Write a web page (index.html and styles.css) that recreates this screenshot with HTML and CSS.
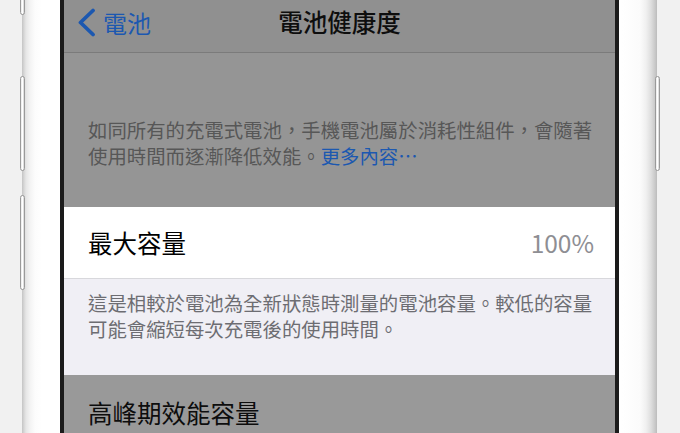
FILE: index.html
```html
<!DOCTYPE html>
<html lang="zh-Hant">
<head>
<meta charset="utf-8">
<title>電池健康度</title>
<link rel="stylesheet" href="styles.css">
</head>
<body>
<div class="stage">
  <div class="phone">
    <span class="btn btn-l1"></span>
    <span class="btn btn-l2"></span>
    <span class="btn btn-l3"></span>
    <span class="btn btn-r1"></span>
    <div class="bezel">
      <div class="screen">
        <header class="nav">
          <div class="back">
            <svg class="chev" viewBox="0 0 19 29" width="19" height="29" aria-hidden="true">
              <polyline points="16,2.5 3.5,14.5 16,26.5" fill="none" stroke="currentColor" stroke-width="3.8" stroke-linecap="round" stroke-linejoin="round"/>
            </svg>
            <span class="back-text">電池</span>
          </div>
          <h1 class="title">電池健康度</h1>
          <div class="spacer"></div>
        </header>
        <section class="intro">
          <p class="line">如同所有的充電式電池，手機電池屬於消耗性組件，會隨著</p>
          <p class="line"><span>使用時間而逐漸降低效能。</span><span class="link">更多內容⋯</span></p>
        </section>
        <section class="cell cell-active">
          <span class="label">最大容量</span>
          <span class="value">100%</span>
        </section>
        <section class="footer">
          <p>這是相較於電池為全新狀態時測量的電池容量。較低的容量可能會縮短每次充電後的使用時間。</p>
        </section>
        <section class="cell cell-dim">
          <span class="label">高峰期效能容量</span>
        </section>
      </div>
    </div>
  </div>
</div>
</body>
</html>
```
FILE: styles.css
```css
* { box-sizing: border-box; margin: 0; padding: 0; }
html, body {
  width: 680px;
  height: 433px;
  overflow: hidden;
  background: #f1f1f1;
}
body {
  font-family: "Noto Sans CJK TC", "Noto Sans", sans-serif;
}
.stage {
  display: flex;
  height: 433px;
  padding-left: 22px;
}
.phone {
  position: relative;
  width: 635px;
  height: 433px;
  padding: 0 38px;
  background: linear-gradient(to right,
    #c4c4c4 0px, #d6d6d6 2px, #e6e6e6 4px, #f3f3f3 8px, #fcfcfc 13px, #ffffff 20px,
    #ffffff 600px, #fbfbfb 618px, #f0f0f0 624px, #dedede 629px, #c9c9c9 633px, #bcbcbc 635px);
}
.btn {
  position: absolute;
  width: 5px;
  border: 1px solid #9a9a9a;
  border-radius: 3px;
  background: linear-gradient(to right, #e8e8e8, #ffffff, #d0d0d0);
}
.btn-l1 { left: -2px; top: -20px; height: 35px; }
.btn-l2 { left: -2px; top: 76px; height: 95px; }
.btn-l3 { left: -2px; top: 195px; height: 95px; }
.btn-r1 { right: -3px; top: 76px; height: 95px; }

.bezel {
  height: 100%;
  border-left: 4px solid #1b1b1b;
  border-right: 4px solid #1b1b1b;
}
.screen {
  width: 551px;
  height: 100%;
  overflow: hidden;
  background: #959595;
  display: flex;
  flex-direction: column;
}
.nav {
  height: 53px;
  flex: none;
  background: #909090;
  border-bottom: 1px solid #7b7b7b;
  display: grid;
  grid-template-columns: 1fr auto 1fr;
  align-items: start;
  padding-top: 8px;
}
.back {
  display: flex;
  align-items: center;
  gap: 7px;
  padding-left: 13px;
  color: #1c58b0;
}
.chev { display: block; flex: none; }
.back-text {
  font-size: 24px;
  line-height: 27px;
}
.title {
  font-size: 24.5px;
  line-height: 27px;
  font-weight: 500;
  color: #0e0e0e;
}
.intro {
  flex: none;
  height: 154px;
  padding: 66px 14px 0 24px;
  background: #959595;
}
.intro .line {
  font-family: "Liberation Sans", "Noto Sans CJK TC", sans-serif;
  font-size: 19.4px;
  line-height: 25.5px;
  color: #575757;
  white-space: nowrap;
}
.link { color: #1c58b0; }

.cell {
  flex: none;
  display: flex;
  align-items: center;
  justify-content: space-between;
  padding: 0 21px 0 24px;
}
.cell-active {
  height: 72px;
  background: #ffffff;
  border-bottom: 1px solid #d8d8dc;
}
.label {
  font-size: 24.5px;
  line-height: 28px;
  color: #000000;
}
.value {
  font-size: 24.5px;
  line-height: 28px;
  color: #8e8e93;
}
.footer {
  flex: none;
  height: 96px;
  padding: 11px 14px 0 24px;
  background: #f0eff5;
}
.footer p {
  font-size: 19.4px;
  line-height: 26px;
  color: #6d6d72;
}
.cell-dim {
  flex: 1;
  align-items: flex-start;
  padding-top: 24px;
  background: #999999;
}
.cell-dim .label { color: #0d0d0d; }
```
